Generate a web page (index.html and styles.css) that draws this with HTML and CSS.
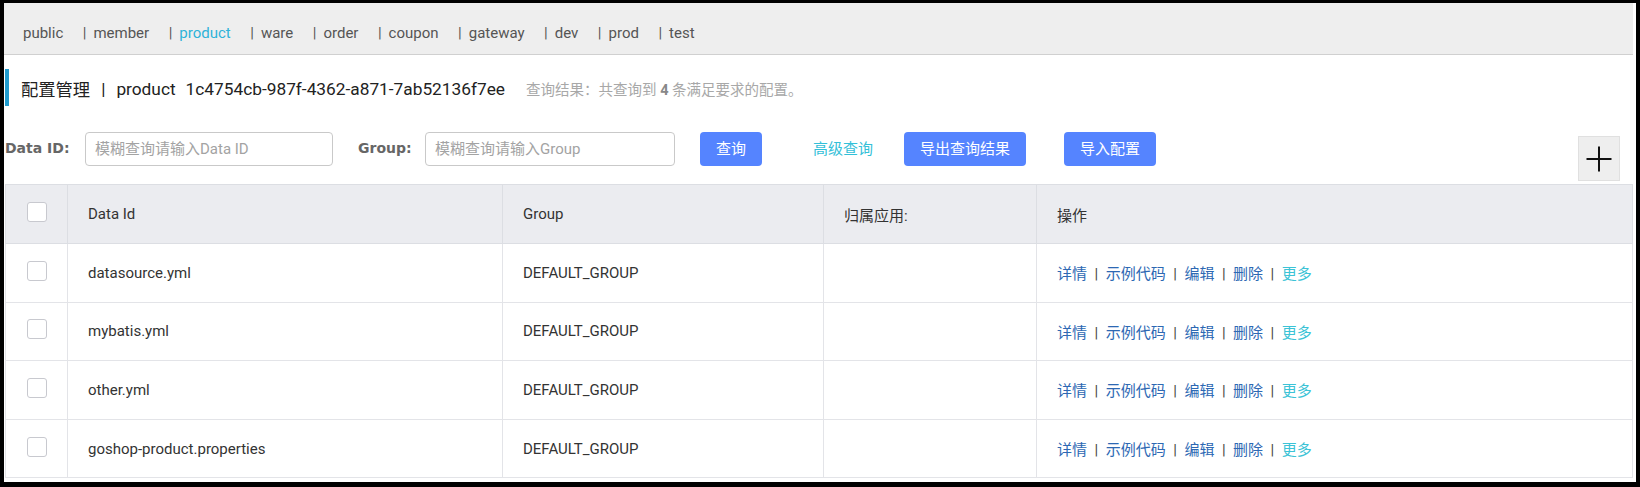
FILE: index.html
```html
<!DOCTYPE html>
<html lang="zh-CN">
<head>
<meta charset="utf-8">
<title>配置管理</title>
<link rel="stylesheet" href="styles.css">
</head>
<body>
<div class="page">
  <div class="nav">
    <span class="nav-item">public</span>
    <span class="nav-item"><span class="sep">|</span>member</span>
    <span class="nav-item active"><span class="sep">|</span>product</span>
    <span class="nav-item"><span class="sep">|</span>ware</span>
    <span class="nav-item"><span class="sep">|</span>order</span>
    <span class="nav-item"><span class="sep">|</span>coupon</span>
    <span class="nav-item"><span class="sep">|</span>gateway</span>
    <span class="nav-item"><span class="sep">|</span>dev</span>
    <span class="nav-item"><span class="sep">|</span>prod</span>
    <span class="nav-item"><span class="sep">|</span>test</span>
  </div>
  <div class="content">
    <div class="title">
      <span class="title-main">配置管理</span>
      <span class="title-sep">|</span>
      <span class="title-ns">product</span>
      <span class="title-id">1c4754cb-987f-4362-a871-7ab52136f7ee</span>
      <span class="title-result">查询结果：共查询到 <b>4</b> 条满足要求的配置。</span>
    </div>
    <div class="search">
      <label class="label label-id">Data ID:</label>
      <div class="input input-id">模糊查询请输入Data ID</div>
      <label class="label label-group">Group:</label>
      <div class="input input-group">模糊查询请输入Group</div>
      <div class="btn btn-query">查询</div>
      <div class="adv">高级查询</div>
      <div class="btn btn-export">导出查询结果</div>
      <div class="btn btn-import">导入配置</div>
      <div class="plus">
        <svg width="26" height="26" viewBox="0 0 26 26"><path d="M13 0.5V25.5M0.5 13H25.5" stroke="#111" stroke-width="2" fill="none"/></svg>
      </div>
    </div>
    <table class="grid">
      <colgroup>
        <col class="c-check"><col class="c-id"><col class="c-group"><col class="c-app"><col class="c-ops">
      </colgroup>
      <thead>
        <tr><th><span class="cb"></span></th><th>Data Id</th><th>Group</th><th>归属应用:</th><th>操作</th></tr>
      </thead>
      <tbody>
        <tr><td><span class="cb"></span></td><td>datasource.yml</td><td>DEFAULT_GROUP</td><td></td>
          <td class="ops"><a>详情</a><i>|</i><a>示例代码</a><i>|</i><a>编辑</a><i>|</i><a>删除</a><i>|</i><a class="more">更多</a></td></tr>
        <tr><td><span class="cb"></span></td><td>mybatis.yml</td><td>DEFAULT_GROUP</td><td></td>
          <td class="ops"><a>详情</a><i>|</i><a>示例代码</a><i>|</i><a>编辑</a><i>|</i><a>删除</a><i>|</i><a class="more">更多</a></td></tr>
        <tr><td><span class="cb"></span></td><td>other.yml</td><td>DEFAULT_GROUP</td><td></td>
          <td class="ops"><a>详情</a><i>|</i><a>示例代码</a><i>|</i><a>编辑</a><i>|</i><a>删除</a><i>|</i><a class="more">更多</a></td></tr>
        <tr><td><span class="cb"></span></td><td>goshop-product.properties</td><td>DEFAULT_GROUP</td><td></td>
          <td class="ops"><a>详情</a><i>|</i><a>示例代码</a><i>|</i><a>编辑</a><i>|</i><a>删除</a><i>|</i><a class="more">更多</a></td></tr>
      </tbody>
    </table>
  </div>
</div>
</body>
</html>
```

FILE: styles.css
```css
* { box-sizing: border-box; }
html, body { margin: 0; padding: 0; }
body {
  background: #000;
  font-family: Roboto, "Noto Sans CJK SC", sans-serif;
  color: #333;
}
.page {
  margin: 3px 4px 0 4px;
  height: 479px;
  background: #fff;
  overflow: hidden;
}
.nav {
  height: 52px;
  margin-right: 3px;
  background: #eeeeee;
  border-bottom: 1px solid #d0d0d0;
  display: flex;
  align-items: center;
  padding: 9px 0 0 19px;
  font-size: 15px;
  color: #555;
}
.nav-item { margin-right: 19.5px; white-space: nowrap; }
.nav-item .sep { margin-right: 7px; color: #555; }
.nav-item.active { color: #2eb3d9; }
.nav-item.active .sep { color: #555; }

.content { padding-left: 1px; }

.title {
  margin-top: 14px;
  height: 37px;
  border-left: 4px solid #1f9bce;
  padding: 2px 0 0 12px;
  display: flex;
  align-items: center;
  font-size: 17.3px;
  color: #222;
  white-space: nowrap;
}
.title-sep { margin: 0 11px; }
.title-id { margin-left: 10px; }
.title-result {
  margin-left: 21px;
  font-size: 14.5px;
  color: #a8a8a8;
}
.title-result b { color: #888; font-weight: bold; }

.search {
  margin-top: 26px;
  display: flex;
  align-items: flex-start;
  padding-right: 16px;
  white-space: nowrap;
}
.label {
  height: 34px;
  line-height: 33px;
  font-family: "DejaVu Sans", sans-serif;
  font-weight: bold;
  font-size: 14px;
  color: #666;
  flex: none;
}
.label-id { width: 80px; }
.label-group { width: 67px; margin-left: 25px; }
.input {
  height: 34px;
  line-height: 32px;
  border: 1px solid #c9c9c9;
  border-radius: 4px;
  padding-left: 9px;
  font-size: 15px;
  color: #a3a3a3;
  flex: none;
}
.input-id { width: 248px; }
.input-group { width: 250px; margin-left: 0; }
.btn {
  height: 34px;
  line-height: 34px;
  padding: 0 16px;
  background: #5584ff;
  color: #fff;
  border-radius: 4px;
  font-size: 15px;
  flex: none;
}
.btn-query { margin-left: 25px; }
.adv {
  margin-left: 51px;
  height: 34px;
  line-height: 34px;
  font-size: 15px;
  color: #33c0d8;
  flex: none;
}
.btn-export { margin-left: 31px; }
.btn-import { margin-left: 38px; }
.plus {
  margin-left: auto;
  margin-top: 4px;
  width: 42px;
  height: 45px;
  background: #eeeeee;
  border: 1px solid #e0e0e0;
  display: flex;
  align-items: center;
  justify-content: center;
  flex: none;
}
.plus svg { display: block; }

.grid {
  margin-top: 3px;
  width: 1627px;
  border-collapse: collapse;
  table-layout: fixed;
  font-size: 15px;
  color: #333;
  border: 1px solid #dcdee3;
}
.c-check { width: 62px; }
.c-id { width: 435px; }
.c-group { width: 321px; }
.c-app { width: 213px; }
.c-ops { width: 596px; }
.grid th, .grid td {
  height: 58.6px;
  padding: 0 0 0 20px;
  text-align: left;
  font-weight: normal;
  border: 1px solid #e3e4e8;
  white-space: nowrap;
  vertical-align: middle;
}
.grid th { height: 59px; background: #ebecf0; border-color: #dcdee3; }
.grid th:first-child, .grid td:first-child { padding: 0; text-align: center; }
.cb {
  display: inline-block;
  width: 20px;
  height: 20px;
  border: 1px solid #c8c9cf;
  border-radius: 3px;
  background: #fff;
  vertical-align: middle;
  margin-bottom: 4px;
}
.ops a { color: #2d68b3; }
.ops a.more { color: #3cc3d6; }
.ops i { font-style: normal; color: #444; margin: 0 7.5px; }
```
